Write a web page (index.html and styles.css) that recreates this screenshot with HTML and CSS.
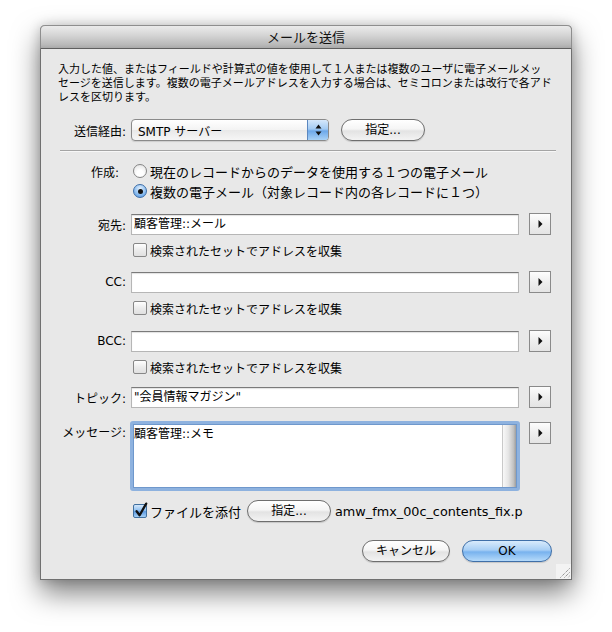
FILE: index.html
```html
<!DOCTYPE html>
<html lang="ja">
<head>
<meta charset="utf-8">
<title>メールを送信</title>
<link rel="stylesheet" href="styles.css">
</head>
<body>
<div class="window">
  <div class="titlebar">メールを送信</div>
  <div class="content">
    <p class="desc"><span class="dline">入力した値、またはフィールドや計算式の値を使用して１人または複数のユーザに電子メールメッ</span><span class="dline">セージを送信します。複数の電子メールアドレスを入力する場合は、セミコロンまたは改行で各アド</span><span class="dline">レスを区切ります。</span></p>

    <div class="row row-via">
      <span class="label">送信経由:</span>
      <div class="popup">
        <span class="popup-text">SMTP サーバー</span>
        <span class="popup-cap"><svg width="7" height="12" viewBox="0 0 7 12"><path d="M3.5 0.5 L6.5 4.5 H0.5Z M0.5 7.5 H6.5 L3.5 11.5Z" fill="#111"/></svg></span>
      </div>
      <div class="btn btn-spec">指定...</div>
    </div>

    <div class="sep"></div>

    <div class="row radio-row radio-first">
      <span class="label label-make">作成:</span>
      <span class="radio"></span>
      <span class="rlabel">現在のレコードからのデータを使用する１つの電子メール</span>
    </div>
    <div class="row radio-row">
      <span class="label"></span>
      <span class="radio on"></span>
      <span class="rlabel">複数の電子メール（対象レコード内の各レコードに１つ）</span>
    </div>

    <div class="row field-row row-to">
      <span class="label">宛先:</span>
      <div class="field">顧客管理::メール</div>
      <span class="arrow"><svg width="5" height="8" viewBox="0 0 5 8"><path d="M0.5 0 L4.5 4 L0.5 8Z" fill="#111"/></svg></span>
    </div>
    <div class="row check-row">
      <span class="cb"></span><span class="clabel">検索されたセットでアドレスを収集</span>
    </div>

    <div class="row field-row row-cc">
      <span class="label">CC:</span>
      <div class="field"></div>
      <span class="arrow"><svg width="5" height="8" viewBox="0 0 5 8"><path d="M0.5 0 L4.5 4 L0.5 8Z" fill="#111"/></svg></span>
    </div>
    <div class="row check-row">
      <span class="cb"></span><span class="clabel">検索されたセットでアドレスを収集</span>
    </div>

    <div class="row field-row row-bcc">
      <span class="label">BCC:</span>
      <div class="field"></div>
      <span class="arrow"><svg width="5" height="8" viewBox="0 0 5 8"><path d="M0.5 0 L4.5 4 L0.5 8Z" fill="#111"/></svg></span>
    </div>
    <div class="row check-row">
      <span class="cb"></span><span class="clabel">検索されたセットでアドレスを収集</span>
    </div>

    <div class="row field-row row-topic">
      <span class="label">トピック:</span>
      <div class="field">"会員情報マガジン"</div>
      <span class="arrow"><svg width="5" height="8" viewBox="0 0 5 8"><path d="M0.5 0 L4.5 4 L0.5 8Z" fill="#111"/></svg></span>
    </div>

    <div class="row msg-row">
      <span class="label msg-label">メッセージ:</span>
      <div class="msgbox">
        <div class="msgtext">顧客管理::メモ</div>
        <div class="scroll"></div>
      </div>
      <span class="arrow arrow-msg"><svg width="5" height="8" viewBox="0 0 5 8"><path d="M0.5 0 L4.5 4 L0.5 8Z" fill="#111"/></svg></span>
    </div>

    <div class="row attach-row">
      <span class="cb on"><svg class="tick" width="14" height="16" viewBox="0 0 14 16"><path d="M2.6 9.2 L5.6 13.2 L12.2 1.6" fill="none" stroke="#111" stroke-width="2.3" stroke-linecap="round" stroke-linejoin="round"/></svg></span>
      <span class="alabel">ファイルを添付</span>
      <div class="btn btn-attach">指定...</div>
      <span class="filename">amw_fmx_00c_contents_fix.p</span>
    </div>

    <div class="row footer">
      <div class="btn btn-cancel">キャンセル</div>
      <div class="btn btn-ok">OK</div>
    </div>
  </div>
  <svg class="grip" width="15" height="15" viewBox="0 0 15 15"><path d="M13.5 4.5 L4.5 13.5 M13.5 8.5 L8.5 13.5 M13.5 12 L12 13.5" stroke="#6e6e6e" stroke-width="1" stroke-dasharray="1 1" fill="none"/></svg>
</div>
</body>
</html>
```

FILE: styles.css
```css
* { box-sizing: border-box; }

html, body {
  margin: 0;
  padding: 0;
  background: #ffffff;
}

body {
  width: 612px;
  height: 632px;
  overflow: hidden;
  font-family: "DejaVu Sans", "Noto Sans CJK JP", sans-serif;
  color: #000;
}

.window {
  margin: 25px 0 0 40px;
  width: 532px;
  height: 555px;
  background: #e8e8e8;
  border: 1px solid #707070;
  border-top: 0;
  border-radius: 5px 5px 0 0;
  box-shadow: 0 13px 28px rgba(0, 0, 0, 0.5), 0 0 12px rgba(0, 0, 0, 0.18);
  position: relative;
  display: flex;
  flex-direction: column;
}

.titlebar {
  margin: 0 -1px;
  height: 24px;
  background: linear-gradient(#ebebeb, #d6d6d6 40%, #b9b9b9 85%, #a9a9a9);
  border: 1px solid #8e8e8e;
  border-bottom-color: #5f5f5f;
  border-radius: 5px 5px 0 0;
  font-family: "Noto Sans CJK JP", sans-serif;
  font-size: 13px;
  line-height: 22px;
  text-align: center;
  color: #111;
}

.content {
  padding-top: 12px;
}

.desc {
  margin: 0 0 0 17px;
  display: flex;
  flex-direction: column;
  font-family: "Noto Sans CJK JP", sans-serif;
  font-size: 11px;
  line-height: 14px;
  white-space: nowrap;
}

.dline {
  display: block;
  height: 14px;
}

.row {
  display: flex;
  align-items: center;
}

.label {
  flex: none;
  width: 85px;
  margin-right: 5px;
  text-align: right;
  font-size: 12px;
  white-space: nowrap;
}

.row-via {
  margin-top: 16px;
  height: 22px;
}

.popup {
  width: 198px;
  height: 22px;
  border: 1px solid #8a8a8a;
  border-radius: 4px;
  background: linear-gradient(#ffffff, #f3f3f3 50%, #e8e8e8 51%, #f6f6f6);
  box-shadow: 0 1px 1px rgba(0, 0, 0, 0.12);
  display: flex;
  align-items: center;
  overflow: hidden;
}

.popup-text {
  flex: 1;
  padding-left: 6px;
  font-size: 12px;
  white-space: nowrap;
}

.popup-cap {
  width: 21px;
  height: 100%;
  border-left: 1px solid #5b87bf;
  background: linear-gradient(#d6e8fb, #a3cbf3 45%, #6da8e9 55%, #a9d2f7);
  display: flex;
  align-items: center;
  justify-content: center;
}

.btn {
  height: 22px;
  border: 1px solid #6e6e6e;
  border-radius: 11px;
  background: linear-gradient(#ffffff, #f5f5f5 45%, #e3e3e3 55%, #f3f3f3);
  box-shadow: 0 1px 1px rgba(0, 0, 0, 0.15);
  font-size: 12px;
  line-height: 20px;
  text-align: center;
  white-space: nowrap;
}

.btn-spec {
  width: 84px;
  margin-left: 12px;
}

.sep {
  height: 1px;
  margin: 9px 15px 0 19px;
  background: #a4a4a4;
  box-shadow: 0 1px 0 #f7f7f7;
}

.radio-row {
  height: 20px;
}

.radio-first {
  margin-top: 10px;
}

.label-make {
  padding-right: 7px;
}

.radio {
  flex: none;
  width: 14px;
  height: 14px;
  margin-left: 2px;
  border: 1px solid #858585;
  border-radius: 50%;
  background: radial-gradient(circle at 50% 70%, #ffffff 30%, #dedede);
  position: relative;
}

.radio.on {
  border-color: #3d6da6;
  background: radial-gradient(circle at 50% 30%, #e3f0fd, #8fbff0 55%, #4d92df);
}

.radio.on::after {
  content: "";
  position: absolute;
  left: 3.5px;
  top: 3.5px;
  width: 5px;
  height: 5px;
  border-radius: 50%;
  background: #111;
}

.rlabel {
  margin-left: 3px;
  font-family: "Noto Sans CJK JP", sans-serif;
  font-size: 13px;
  white-space: nowrap;
}

.field-row {
  height: 22px;
}

.row-to { margin-top: 12px; }
.row-cc { margin-top: 13px; }
.row-bcc { margin-top: 14px; }
.row-topic { margin-top: 11px; }

.field {
  width: 388px;
  height: 21px;
  background: #fff;
  border: 1px solid #b6b6b6;
  border-top-color: #7a7a7a;
  box-shadow: inset 0 1px 1px rgba(0, 0, 0, 0.12);
  font-size: 12px;
  line-height: 19px;
  padding-left: 2px;
  white-space: nowrap;
}

.arrow {
  flex: none;
  width: 22px;
  height: 22px;
  margin-left: 10px;
  border: 1px solid #8a8a8a;
  background: linear-gradient(#fdfdfd, #eeeeee 50%, #e4e4e4);
  display: flex;
  align-items: center;
  justify-content: center;
}

.check-row {
  height: 16px;
  margin-top: 7px;
  padding-left: 92px;
}

.cb {
  flex: none;
  width: 14px;
  height: 14px;
  border: 1px solid #878787;
  border-radius: 2px;
  background: linear-gradient(#ffffff, #ececec 50%, #e0e0e0);
  position: relative;
}

.cb.on {
  border-color: #41709f;
  background: linear-gradient(#d5e8fb, #90c0f0 45%, #5f9be1 55%, #a5d0f6);
}

.tick {
  position: absolute;
  left: 0;
  top: -3px;
}

.clabel {
  margin-left: 3px;
  font-family: "Noto Sans CJK JP", sans-serif;
  font-size: 12px;
  white-space: nowrap;
}

.msg-row {
  margin-top: 13px;
  align-items: flex-start;
}

.msg-label {
  padding-top: 4px;
  line-height: 16px;
}

.msgbox {
  width: 390px;
  height: 70px;
  margin-left: -1px;
  border: 3px solid #8eb2df;
  border-radius: 3px;
  box-shadow: inset 0 0 0 1px #6f98cc;
  background: #fff;
  position: relative;
}

.msgtext {
  padding: 2px 0 0 1px;
  font-size: 12px;
  line-height: 16px;
}

.scroll {
  position: absolute;
  top: 1px;
  right: 1px;
  bottom: 1px;
  width: 14px;
  border-left: 1px solid #c9c9c9;
  background: linear-gradient(to right, #f8f8f8, #e6e6e6 40%, #c2c2c2 80%, #9e9e9e);
}

.arrow-msg {
  margin-left: 9px;
  margin-top: 1px;
}

.attach-row {
  margin-top: 9px;
  height: 22px;
  padding-left: 92px;
}

.alabel {
  margin-left: 3px;
  font-family: "Noto Sans CJK JP", sans-serif;
  font-size: 13px;
  white-space: nowrap;
}

.btn-attach {
  width: 84px;
  margin-left: 6px;
}

.filename {
  margin-left: 4px;
  white-space: nowrap;
  font-size: 12.8px;
}

.footer {
  margin-top: 18px;
  justify-content: flex-end;
  padding-right: 19px;
  gap: 12px;
}

.btn-cancel {
  width: 88px;
}

.btn-ok {
  width: 90px;
  border-color: #3f6fa8;
  background: linear-gradient(#d9ebfc, #a8cff5 45%, #78b2ee 55%, #b5dafa);
}

.grip {
  position: absolute;
  right: 0;
  bottom: 0;
  background: #f3f3f3;
}
```
